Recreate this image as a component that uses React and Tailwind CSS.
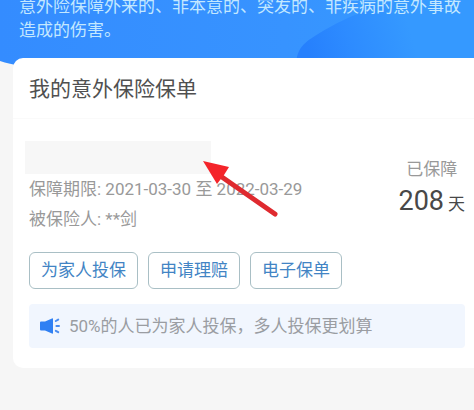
const actions = ["为家人投保", "申请理赔", "电子保单"];

function HeaderBackground() {
  return (
    <svg
      className="absolute inset-0 h-full w-full"
      viewBox="0 0 474 66"
      preserveAspectRatio="none"
      aria-hidden="true"
    >
      <defs>
        <linearGradient id="sky" x1="0" y1="0" x2="1" y2="0">
          <stop offset="0" stopColor="#348cff" />
          <stop offset="0.6" stopColor="#3793ff" />
          <stop offset="1" stopColor="#359cff" />
        </linearGradient>
        <linearGradient id="hill" gradientUnits="userSpaceOnUse" x1="310" y1="60" x2="410" y2="30">
          <stop offset="0" stopColor="#2680fd" />
          <stop offset="0.4" stopColor="#2d8bff" />
          <stop offset="1" stopColor="#3599ff" />
        </linearGradient>
      </defs>
      <path d="M0 0H474V66H22Q9 64 0 61Z" fill="url(#sky)" />
      <path d="M296 66C296 48 305 42 318 34C336 23 350 16 374 8L400 0H474V66Z" fill="url(#hill)" />
    </svg>
  );
}

function SpeakerIcon() {
  return (
    <svg className="h-4 w-5 shrink-0" viewBox="0 0 20 16" aria-hidden="true">
      <path d="M1 3.5H5L12 0.5Q13 0 13 1V15Q13 16 12 15.5L5 12.5H1Q0 12.5 0 11.5V4.5Q0 3.5 1 3.5Z" fill="#3080f3" />
      <path d="M15.8 3L18.2 1.6M16.4 8H19M15.8 12.8L18.2 14.2" stroke="#4b8df0" strokeWidth="2" strokeLinecap="round" />
    </svg>
  );
}

function Arrow() {
  return (
    <svg className="absolute top-5 left-[174px] h-[60px] w-[78px]" viewBox="0 0 78 60" aria-hidden="true">
      <path d="M16 14L72 53" stroke="#df2a2f" strokeWidth="5" strokeLinecap="round" />
      <path d="M0 0L26 6L21 14L14 23Z" fill="#f4242a" />
    </svg>
  );
}

export default function App() {
  return (
    <div className="min-h-screen bg-[#f6f6f6] font-[Roboto,'Noto_Sans_CJK_SC',sans-serif] text-[17px]">
      <header className="relative overflow-hidden pb-6">
        <HeaderBackground />
        <p className="relative -mt-1.5 pr-1 pl-[19px] leading-6 text-[#c3e8ff]">
          意外险保障外来的、非本意的、突发的、非疾病的意外事故造成的伤害。
        </p>
      </header>

      <main className="relative -mt-2 ml-[13px] rounded-l-[10px] bg-white pr-[9px] pb-5 pl-4">
        <h1 className="-mr-[9px] -ml-4 border-b border-[#fafafa] pt-[17px] pb-[15px] pl-4 text-[21px] leading-7 text-[#505050]">
          我的意外保险保单
        </h1>

        <section className="flex justify-between pt-[22px] text-[#999]">
          <div className="relative leading-[30px]">
            <div className="-ml-1 h-[33px] w-[186px] bg-[#f7f7f7]" />
            <p>保障期限: 2021-03-30 至 2022-03-29</p>
            <p>被保险人: **剑</p>
            <Arrow />
          </div>
          <div className="pt-4 text-center">
            <p className="leading-6">已保障</p>
            <p className="leading-10 text-[#484848]">
              <span className="mr-1 text-[27px]">208</span>天
            </p>
          </div>
        </section>

        <div className="mt-[18px] flex gap-[10px]">
          {actions.map((label) => (
            <button
              key={label}
              type="button"
              className="rounded-md border border-[#a9bfc5] px-[11px] py-[5px] leading-[25px] text-[#4284c4]"
            >
              {label}
            </button>
          ))}
        </div>

        <div className="mt-[15px] flex items-center gap-[9px] rounded-sm bg-[#f1f6fe] py-[10px] pl-[11px] leading-6 text-[#9a9da2]">
          <SpeakerIcon />
          <p>50%的人已为家人投保，多人投保更划算</p>
        </div>
      </main>
    </div>
  );
}
